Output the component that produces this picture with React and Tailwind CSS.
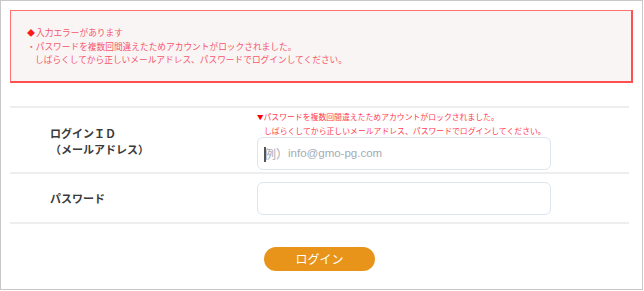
import React from "react";

export default function App() {
  const jp = { fontFamily: '"Noto Sans CJK JP", "Noto Sans", sans-serif' };
  return (
    <div
      className="w-[643px] h-[290px] bg-white border border-[#c8c8c8] overflow-hidden"
      style={jp}
    >
      <div className="pt-[9px] px-[9px]">
        {/* Error box */}
        <div className="h-[73px] bg-[#faf5f5] border border-[#ff7070] border-r-2 border-b-2 border-r-[#ff5050] border-b-[#ff5050] pt-[15px] pl-[16px] text-[8.7px] leading-[13.5px] text-[#f5566b]">
          <div className="flex items-center">
            <span className="text-[#ff1a1a] text-[8px] mr-[1px]">◆</span>
            <span>入力エラーがあります</span>
          </div>
          <div>・パスワードを複数回間違えたためアカウントがロックされました。</div>
          <div className="pl-[8px]">しばらくしてから正しいメールアドレス、パスワードでログインしてください。</div>
        </div>

        {/* Form */}
        <div className="mt-[23px] w-[619px]">
          <div className="h-[2px] bg-[#eeeeee]" />
          <div className="flex h-[64px]">
            <div className="w-[247px] flex flex-col justify-center pl-[40px] pt-[1px] text-[11px] leading-[16px] font-bold text-[#3a3a3a]">
              <div>ログインＩＤ</div>
              <div>（メールアドレス）</div>
            </div>
            <div className="w-[294px] pt-[2px]">
              <div className="text-[7.85px] leading-[13px] text-[#ff3b4e] whitespace-nowrap">
                <div>
                  <span className="text-[#ff0000] text-[6.5px]">▼</span>パスワードを複数回間違えたためアカウントがロックされました。
                </div>
                <div className="pl-[7px]">しばらくしてから正しいメールアドレス、パスワードでログインしてください。</div>
              </div>
              <div className="relative h-[33px] rounded-[6px] border border-[#dde5ef] bg-white flex items-center pl-[6px]">
                <span className="absolute left-[6px] top-[9px] w-[2px] h-[15px] bg-[#555555]" />
                <span className="text-[12px] text-[#a3abb5]">例）</span>
                <span
                  className="text-[11.5px] text-[#a3abb5]"
                  style={{ fontFamily: '"Liberation Sans", Arial, sans-serif' }}
                >
                  info@gmo-pg.com
                </span>
              </div>
            </div>
          </div>
          <div className="h-[2px] bg-[#eeeeee]" />
          <div className="flex h-[48px]">
            <div className="w-[247px] flex items-center pl-[40px] text-[11px] font-bold text-[#3a3a3a]">
              パスワード
            </div>
            <div className="w-[294px] pt-[8px]">
              <div className="h-[33px] rounded-[6px] border border-[#dde5ef] bg-white" />
            </div>
          </div>
          <div className="h-[2px] bg-[#eeeeee]" />
          <div className="flex justify-center mt-[23px]">
            <button className="w-[111px] h-[24px] rounded-full bg-[#e8941a] text-white text-[12px] leading-none flex items-center justify-center">
              ログイン
            </button>
          </div>
        </div>
      </div>
    </div>
  );
}
